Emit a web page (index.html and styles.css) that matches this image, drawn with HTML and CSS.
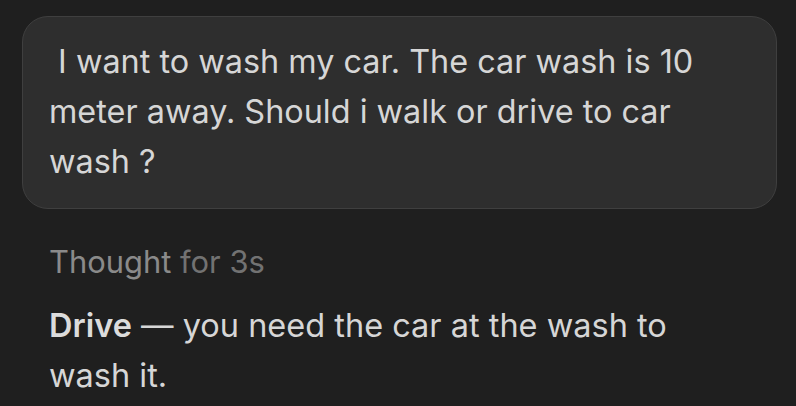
FILE: index.html
```html
<!DOCTYPE html>
<html>
<head>
<meta charset="utf-8">
<link rel="stylesheet" href="styles.css">
</head>
<body>
<div class="chat">
  <div class="bubble"><p class="bubble-text">&nbsp;I want to wash my car. The car wash is 10 meter away. Should i walk or drive to car wash ?</p></div>
  <div class="reply">
    <div class="thought"><span class="thought-a">Thought</span> <span class="thought-b">for 3s</span></div>
    <p class="answer"><strong>Drive</strong> — you need the car at the wash to wash it.</p>
  </div>
</div>
</body>
</html>
```
FILE: styles.css
```css
html, body {
  margin: 0;
  padding: 0;
  background: #1f1f1f;
}
body {
  font-family: Inter, "Noto Sans", "Liberation Sans", sans-serif;
  color: #d6d6d6;
}
.chat {
  padding: 16px 19px 0 22px;
  display: flex;
  flex-direction: column;
}
.bubble {
  background: #2e2e2e;
  border: 1px solid #3f3f3f;
  border-radius: 26px;
  padding: 20px 26px 21px 26px;
}
.bubble-text {
  margin: 0;
  font-size: 32.4px;
  line-height: 50px;
  max-width: 680px;
}
.reply {
  padding: 28px 27px 0 27px;
}
.thought {
  font-size: 30.9px;
  line-height: 50px;
}
.thought-a { color: #8a8a8a; }
.thought-b { color: #727272; }
.answer {
  margin: 14px 0 0 0;
  font-size: 32.5px;
  line-height: 50px;
  max-width: 660px;
}
.answer strong {
  font-weight: 600;
  color: #dcdcdc;
}
```
